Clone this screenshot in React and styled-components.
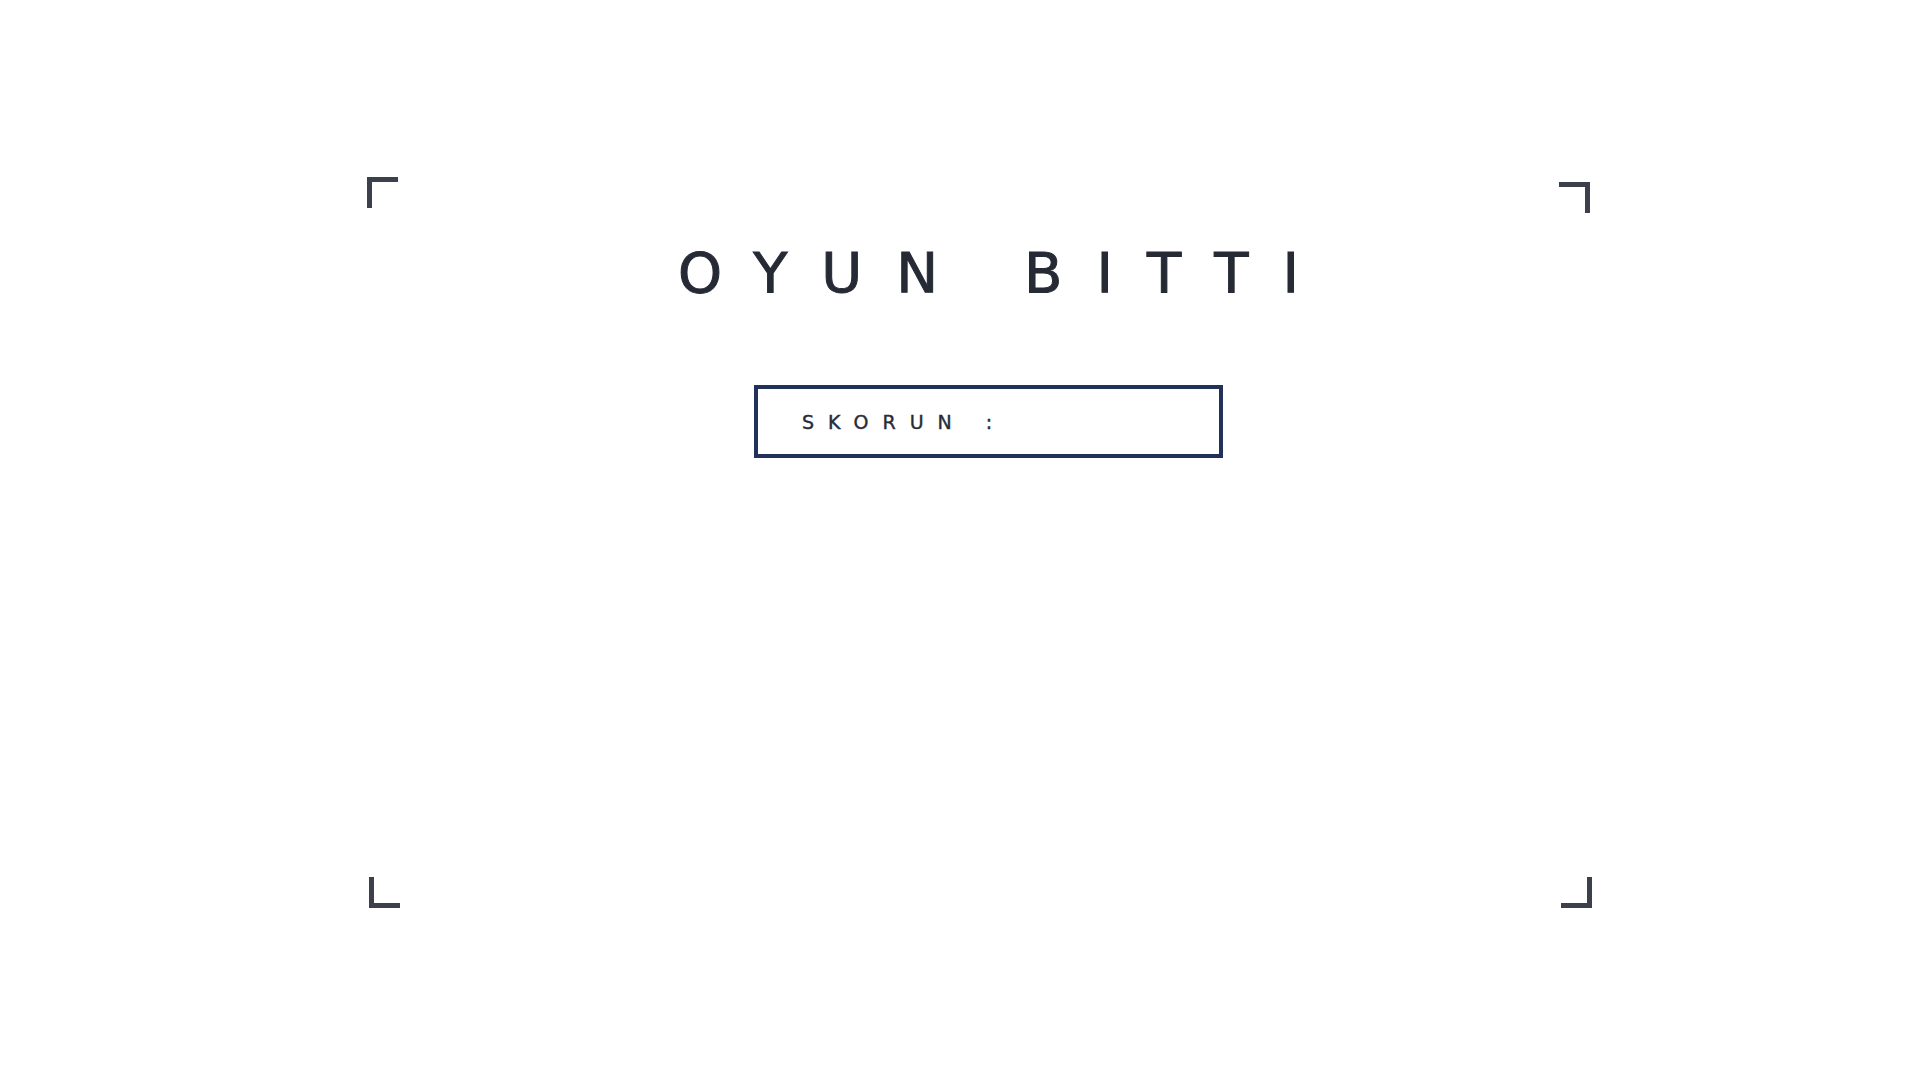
import styled, { createGlobalStyle } from 'styled-components';

const Global = createGlobalStyle`
  html, body {
    margin: 0;
    padding: 0;
    background: #ffffff;
  }
  body {
    font-family: "DejaVu Sans", "Liberation Sans", sans-serif;
  }
`;

const Page = styled.div`
  width: 1920px;
  height: 1080px;
  padding: 177px 0 0 367px;
  box-sizing: border-box;
`;

const Frame = styled.div`
  position: relative;
  width: 1225px;
  height: 731px;
  display: flex;
  flex-direction: column;
  align-items: center;
  padding: 68px 0 0 18px;
  box-sizing: border-box;
`;

const Corner = styled.span`
  position: absolute;
  width: 31px;
  height: 31px;
  box-sizing: border-box;
  border: 0 solid #3c404b;
  ${({ $v }) => ($v === 'top' ? 'top: 0; border-top-width: 5px;' : 'bottom: 0; border-bottom-width: 5px;')}
  ${({ $h }) => ($h === 'left' ? 'left: 0; border-left-width: 5px;' : 'right: 0; border-right-width: 5px;')}
  ${({ $shift }) => $shift || ''}
`;

const Title = styled.h1`
  margin: 0 -34px 0 0;
  font-size: 56px;
  font-weight: 400;
  line-height: 1;
  letter-spacing: 34px;
  color: #252a35;
  -webkit-text-stroke: 1px #252a35;
  white-space: nowrap;
`;

const ScoreBox = styled.div`
  margin-top: 84px;
  width: 469px;
  height: 73px;
  border: 4px solid #22315a;
  box-sizing: border-box;
  display: flex;
  align-items: center;
  padding-left: 44px;
`;

const ScoreLabel = styled.span`
  font-size: 19px;
  letter-spacing: 14px;
  color: #272c38;
  -webkit-text-stroke: 0.4px #272c38;
  white-space: nowrap;
`;

export default function App() {
  return (
    <>
      <Global />
      <Page>
        <Frame>
          <Corner $v="top" $h="left" />
          <Corner $v="top" $h="right" $shift="top: 5px; right: 2px;" />
          <Corner $v="bottom" $h="left" $shift="left: 2px;" />
          <Corner $v="bottom" $h="right" />
          <Title>OYUN BITTI</Title>
          <ScoreBox>
            <ScoreLabel>SKORUN :</ScoreLabel>
          </ScoreBox>
        </Frame>
      </Page>
    </>
  );
}
